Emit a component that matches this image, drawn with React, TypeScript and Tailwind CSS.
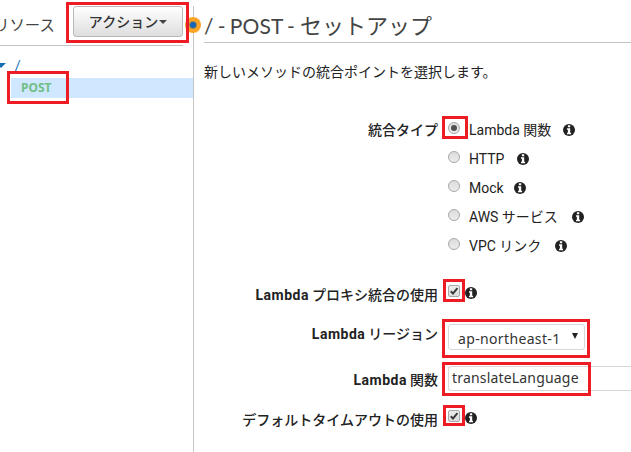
import type { ReactNode } from "react";

const jp = "font-['Roboto','Noto_Sans_CJK_JP',sans-serif]";

function Info({ className = "" }: { className?: string }) {
  return (
    <svg className={`size-3 shrink-0 ${className}`} viewBox="0 0 12 12">
      <circle cx="6" cy="6" r="6" fill="#222" />
      <path d="M4.9 1.3h2.3v2H4.9zM4 4.2h3.2v4.5h.9v1.5H4V8.7h.9v-3H4z" fill="#fff" />
    </svg>
  );
}

function Radio({ checked = false }: { checked?: boolean }) {
  return (
    <span className="flex size-3 shrink-0 items-center justify-center rounded-full border border-[#a8a8a8] bg-linear-to-b from-[#dcdcdc] to-[#ececec]">
      {checked && <span className="size-1.5 rounded-full bg-[#505050]" />}
    </span>
  );
}

function Check() {
  return (
    <span className="block size-3 shrink-0 rounded-xs border border-[#a8a8a8] bg-linear-to-b from-[#ececec] to-[#dcdcdc]">
      <svg viewBox="0 0 10 10" className="block size-full">
        <path d="M1.8 5.3 4 7.6 8.4 2.2" fill="none" stroke="#383838" strokeWidth="2" />
      </svg>
    </span>
  );
}

function Label({ lambda = false, children }: { lambda?: boolean; children: ReactNode }) {
  return (
    <div className="w-[234px] shrink-0 text-right leading-[22px] font-medium whitespace-nowrap">
      {lambda && <span className="mr-[3px] font-bold tracking-[0.5px]">Lambda</span>}
      {children}
    </div>
  );
}

function Option({ text, width, checked }: { text: string; width: string; checked?: boolean }) {
  return (
    <div className="flex h-[29px] items-start">
      <span className="mt-[3px]"><Radio checked={checked} /></span>
      <span className={`ml-[9px] leading-[22px] whitespace-nowrap ${width}`}>{text}</span>
      <Info className="mt-[5px]" />
    </div>
  );
}

function Mark({ className }: { className: string }) {
  return <div className={`pointer-events-none absolute border-3 border-[#ed1c24] ${className}`} />;
}

export default function App() {
  return (
    <div className={`relative flex h-[452px] w-[631px] overflow-hidden bg-white text-[14px] text-[#222] ${jp}`}>
      <aside className="mt-1.5 w-[194px] shrink-0 border-r border-[#c4c4c4]">
        <div className="mr-2.5 flex h-10 border-b border-[#c4c4c4]">
          <h2 className="-ml-[6px] w-[79px] shrink-0 pt-2 text-[15.4px] leading-[24px] whitespace-nowrap text-[#444]">リソース</h2>
          <button className="flex h-[31px] w-[110px] items-center justify-center rounded-[3px] border border-[#b8b8b8] bg-linear-to-b from-white to-[#dedede] pt-px text-[14px] font-medium whitespace-nowrap text-[#333]">
            アクション
            <span className="ml-px border-x-4 border-t-4 border-x-transparent border-t-[#444]" />
          </button>
        </div>
        <div className="flex h-8 items-start">
          <span className="mt-[17px] -ml-[4px] border-x-[5px] border-t-[5px] border-x-transparent border-t-[#146eb4]" />
          <span className="mt-[9px] ml-2 font-['Lato',sans-serif] text-[15px] leading-5 text-[#146eb4]">/</span>
        </div>
        <div className="ml-[11px] h-5 bg-[#cfe7ff] pl-2.5 font-['Noto_Sans',sans-serif] text-[12px] leading-5 font-bold text-[#70bf85]">POST</div>
      </aside>

      <main className="ml-2.5 min-w-0 flex-1">
        <h1 className="flex h-[43px] items-start border-b border-[#c4c4c4] pt-2.5 font-['Lato','Noto_Sans_CJK_JP',sans-serif] text-[22px] leading-8 font-normal whitespace-nowrap text-[#444]">
          <span className="w-[96px] text-[21px] tracking-[0.1px] [word-spacing:-1.3px]">/ - POST -</span>
          <span>セットアップ</span>
        </h1>
        <p className="mt-[18px] leading-[22px] whitespace-nowrap">新しいメソッドの統合ポイントを選択します。</p>

        <div className="mt-[36px] flex h-[165px]">
          <Label>統合タイプ</Label>
          <div className="ml-[10px]">
            <Option text="Lambda 関数" width="w-[94px]" checked />
            <Option text="HTTP" width="w-[48px]" />
            <Option text="Mock" width="w-[45px]" />
            <Option text="AWS サービス" width="w-[103px]" />
            <Option text="VPC リンク" width="w-[86px]" />
          </div>
        </div>

        <div className="flex h-[39px]">
          <Label lambda>プロキシ統合の使用</Label>
          <span className="mt-px ml-[10px]"><Check /></span>
          <Info className="mt-[3px] ml-[5px]" />
        </div>
        <div className="flex h-[42px]">
          <Label lambda>リージョン</Label>
          <div className="mt-px ml-[10px] flex h-[26px] w-[137px] items-center justify-between rounded-[3px] border border-[#d8d8d8] pr-1.5 pl-[9px] font-['Noto_Sans',sans-serif] text-[14px] text-[#333]">
            <span className="pt-[3px] tracking-[0.35px] whitespace-nowrap">ap-northeast-1</span>
            <span className="-mt-0.5 border-x-[3px] border-t-[6px] border-x-transparent border-t-[#222]" />
          </div>
        </div>
        <div className="flex h-[44px] items-start pt-px">
          <div className="pt-[3px]"><Label lambda>関数</Label></div>
          <div className="ml-[10px] h-[25px] flex-1 rounded-l-[3px] border border-r-0 border-[#d8d8d8] pl-[3px] font-['Noto_Sans',sans-serif] text-[14px] leading-[22px] tracking-[0.18px] text-[#333]">translateLanguage</div>
        </div>
        <div className="flex">
          <Label>デフォルトタイムアウトの使用</Label>
          <span className="mt-px ml-[10px]"><Check /></span>
          <Info className="mt-[3px] ml-[5px]" />
        </div>
      </main>

      <div className="absolute top-[17px] left-[185px] flex size-4 items-center justify-center rounded-full bg-[#faa528]">
        <span className="flex size-2 items-center justify-center rounded-full bg-[#a88a48]">
          <span className="size-1.5 rounded-full bg-[#1166bb]" />
        </span>
      </div>
      <Mark className="top-[2px] left-[66px] h-[41px] w-[123px]" />
      <Mark className="top-[71px] left-[7px] h-[33px] w-[62px]" />
      <Mark className="top-[116px] left-[442px] h-[23px] w-[26px]" />
      <Mark className="top-[279px] left-[443px] h-[23px] w-[22px]" />
      <Mark className="top-[319px] left-[442px] h-[39px] w-[148px]" />
      <Mark className="top-[362px] left-[442px] h-[34px] w-[149px]" />
      <Mark className="top-[405px] left-[443px] h-[21px] w-[22px]" />
    </div>
  );
}
